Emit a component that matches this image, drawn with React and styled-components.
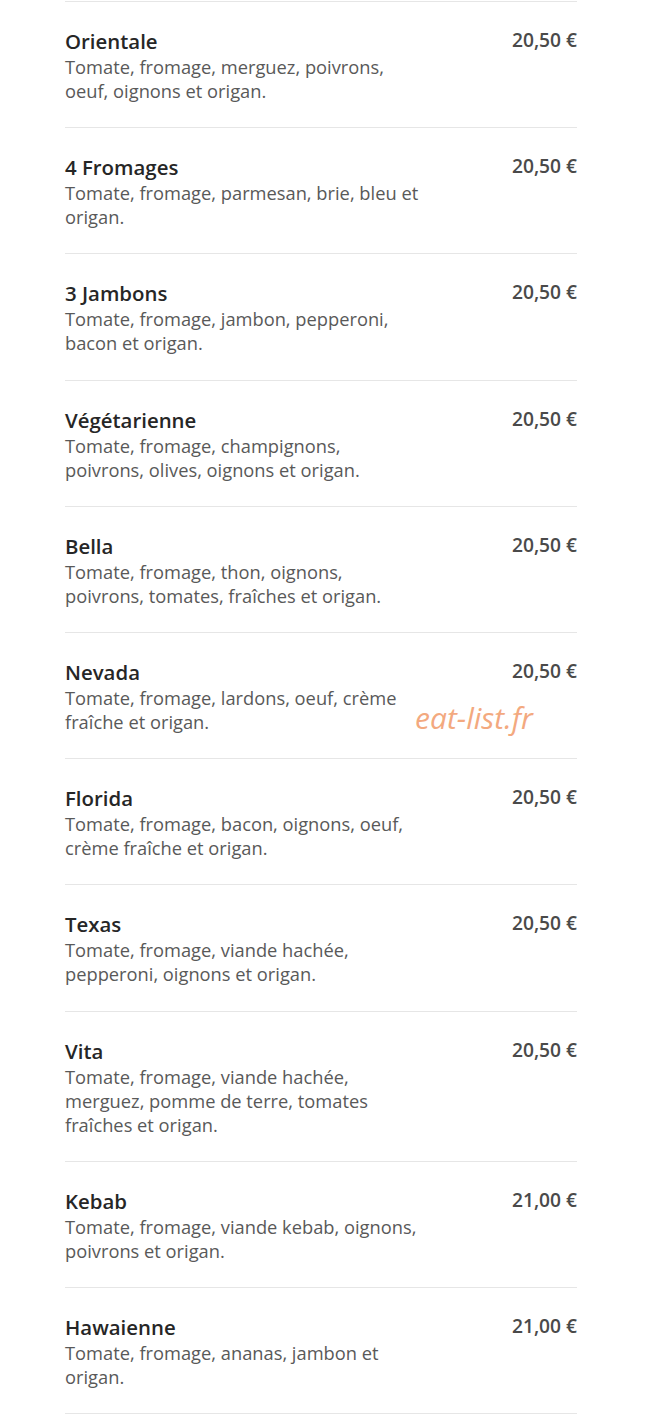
import React from "react";
import styled, { createGlobalStyle } from "styled-components";

const Global = createGlobalStyle`
  html, body { margin: 0; padding: 0; background: #fff; }
  body { font-family: "Open Sans", "Liberation Sans", sans-serif; }
`;

const Page = styled.div`
  width: 646px;
  padding-top: 1px;
  position: relative;
`;

const List = styled.ul`
  list-style: none;
  margin: 0 0 0 65px;
  padding: 0;
  width: 512px;
  border-bottom: 1px solid #e6e6e6;
`;

const Item = styled.li`
  display: flex;
  justify-content: space-between;
  align-items: flex-start;
  border-top: 1px solid #e6e6e6;
  padding: 27px 0 24.2px;
`;

const Info = styled.div`
  width: 356px;
`;

const Name = styled.div`
  font-size: 20.4px;
  line-height: 26px;
  font-weight: 600;
  color: #262626;
  margin-top: -1px;
  margin-bottom: 1px;
`;

const Desc = styled.div`
  font-size: 18.3px;
  line-height: 24px;
  color: #595959;
`;

const Price = styled.div`
  font-size: 19.2px;
  line-height: 26px;
  font-weight: 600;
  color: #4a4a4a;
  white-space: nowrap;
  margin-top: -2px;
`;

const Watermark = styled.div`
  position: absolute;
  left: 415px;
  top: 697px;
  font-size: 30px;
  font-style: italic;
  color: #f3a97f;
  font-family: "Open Sans", "Liberation Sans", sans-serif;
`;

const items = [
  ["Orientale", "Tomate, fromage, merguez, poivrons, oeuf, oignons et origan.", "20,50 €"],
  ["4 Fromages", "Tomate, fromage, parmesan, brie, bleu et origan.", "20,50 €"],
  ["3 Jambons", "Tomate, fromage, jambon, pepperoni, bacon et origan.", "20,50 €"],
  ["Végétarienne", "Tomate, fromage, champignons, poivrons, olives, oignons et origan.", "20,50 €"],
  ["Bella", "Tomate, fromage, thon, oignons, poivrons, tomates, fraîches et origan.", "20,50 €"],
  ["Nevada", "Tomate, fromage, lardons, oeuf, crème fraîche et origan.", "20,50 €"],
  ["Florida", "Tomate, fromage, bacon, oignons, oeuf, crème fraîche et origan.", "20,50 €"],
  ["Texas", "Tomate, fromage, viande hachée, pepperoni, oignons et origan.", "20,50 €"],
  ["Vita", "Tomate, fromage, viande hachée, merguez, pomme de terre, tomates fraîches et origan.", "20,50 €"],
  ["Kebab", "Tomate, fromage, viande kebab, oignons, poivrons et origan.", "21,00 €"],
  ["Hawaienne", "Tomate, fromage, ananas, jambon et origan.", "21,00 €"],
];

export default function App() {
  return (
    <Page>
      <Global />
      <List>
        {items.map(([n, d, p]) => (
          <Item key={n}>
            <Info>
              <Name>{n}</Name>
              <Desc>{d}</Desc>
            </Info>
            <Price>{p}</Price>
          </Item>
        ))}
      </List>
      <Watermark>eat-list.fr</Watermark>
    </Page>
  );
}
